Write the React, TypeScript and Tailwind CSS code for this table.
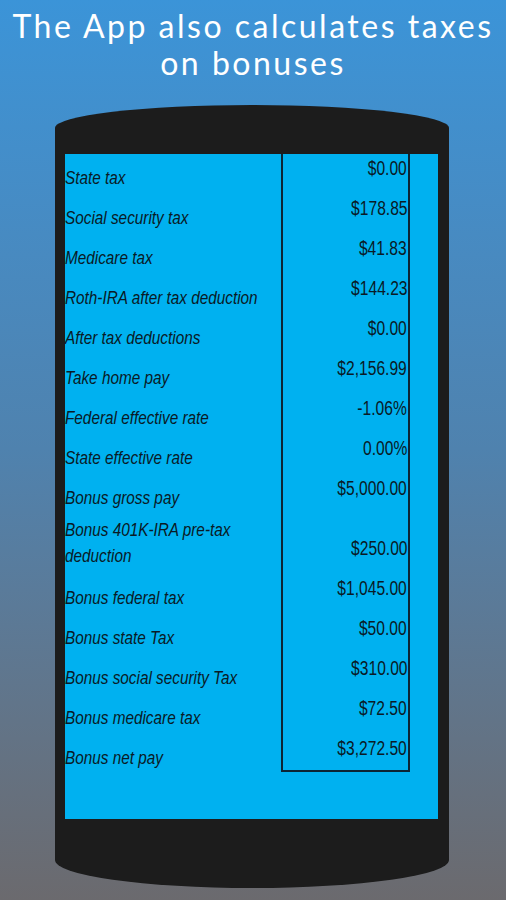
import React from "react";

const rows: { label: React.ReactNode; value: string; tall?: boolean; last?: boolean }[] = [
  { label: "State tax", value: "$0.00" },
  { label: "Social security tax", value: "$178.85" },
  { label: "Medicare tax", value: "$41.83" },
  { label: "Roth-IRA after tax deduction", value: "$144.23" },
  { label: "After tax deductions", value: "$0.00" },
  { label: "Take home pay", value: "$2,156.99" },
  { label: "Federal effective rate", value: "-1.06%" },
  { label: "State effective rate", value: "0.00%" },
  { label: "Bonus gross pay", value: "$5,000.00" },
  {
    label: (
      <>
        Bonus 401K-IRA pre-tax
        <br />
        deduction
      </>
    ),
    value: "$250.00",
    tall: true,
  },
  { label: "Bonus federal tax", value: "$1,045.00" },
  { label: "Bonus state Tax", value: "$50.00" },
  { label: "Bonus social security Tax", value: "$310.00" },
  { label: "Bonus medicare tax", value: "$72.50" },
  { label: "Bonus net pay", value: "$3,272.50", last: true },
];

function Row({ row }: { row: (typeof rows)[number] }) {
  const h = row.tall ? "h-[60px]" : row.last ? "h-[38px]" : "h-[40px]";
  return (
    <div className={`flex ${h}`}>
      <div
        className={`w-[216px] text-[17.5px] italic ${
          row.tall ? "pt-[3px] leading-[26px]" : "pt-[14px] leading-[20px]"
        }`}
      >
        <span className="inline-block origin-left scale-x-[0.875] whitespace-nowrap">{row.label}</span>
      </div>
      <div
        className={`w-[129px] border-x-2 border-[#0c2535] pr-[1px] text-right text-[19.5px] leading-[20px] ${
          row.tall ? "pt-[24px]" : "pt-[4px]"
        } ${row.last ? "border-b-2" : ""}`}
      >
        <span className="inline-block origin-right scale-x-[0.8] whitespace-nowrap">{row.value}</span>
      </div>
    </div>
  );
}

export default function App() {
  return (
    <div className="w-[506px] h-[900px] overflow-hidden bg-gradient-to-b from-[#3b94d8] via-[#4f82ae] to-[#6b6a6e]">
      <h1
        className="pt-[7px] text-center text-[32px] leading-[37px] tracking-[2.5px] text-white"
        style={{ fontFamily: "Lato, 'Open Sans', sans-serif" }}
      >
        The App also calculates taxes
        <br />
        on bonuses
      </h1>

      <div className="mt-[24px] ml-[55px] w-[394px] rounded-t-[50%_23px] rounded-b-[50%_28px] bg-[#1c1c1c] pt-[49px] pb-[69px] pl-[10px] pr-[11px]">
        <div
          className="h-[665px] bg-[#00b1f0] text-[#0a1a26]"
          style={{ fontFamily: "'Liberation Sans', Arial, sans-serif" }}
        >
          {rows.map((r, i) => (
            <Row key={i} row={r} />
          ))}
        </div>
      </div>
    </div>
  );
}
